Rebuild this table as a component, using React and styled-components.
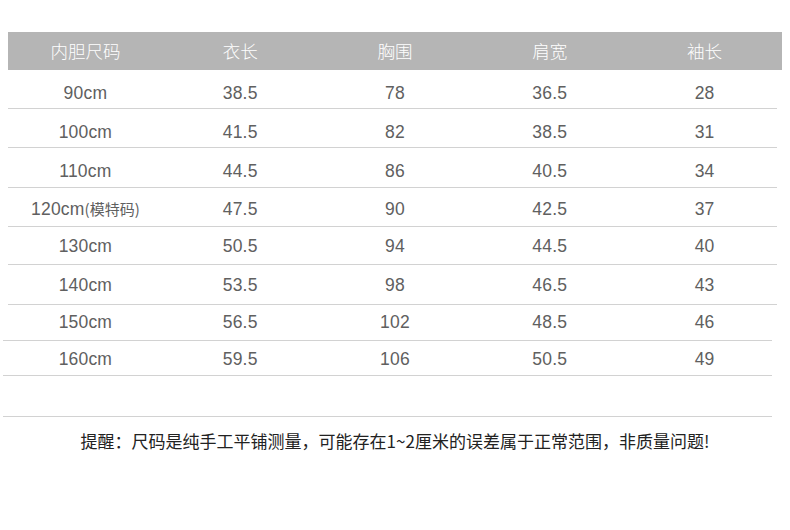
import React from "react";
import styled, { createGlobalStyle } from "styled-components";

const headers = ["内胆尺码", "衣长", "胸围", "肩宽", "袖长"];

// h: row height incl. line, pad: space above text
const rows = [
  { size: "90cm", cells: ["38.5", "78", "36.5", "28"], h: 39, pad: 13 },
  { size: "100cm", cells: ["41.5", "82", "38.5", "31"], h: 39, pad: 13 },
  { size: "110cm", cells: ["44.5", "86", "40.5", "34"], h: 40, pad: 13 },
  { size: "120cm", note: "(模特码)", cells: ["47.5", "90", "42.5", "37"], h: 39, pad: 11 },
  { size: "130cm", cells: ["50.5", "94", "44.5", "40"], h: 38, pad: 9 },
  { size: "140cm", cells: ["53.5", "98", "46.5", "43"], h: 40, pad: 10 },
  { size: "150cm", cells: ["56.5", "102", "48.5", "46"], h: 36, pad: 7 },
  { size: "160cm", cells: ["59.5", "106", "50.5", "49"], h: 35, pad: 8 },
];

const GlobalStyle = createGlobalStyle`
  html, body {
    margin: 0;
    padding: 0;
    background: #ffffff;
  }
  body {
    font-family: "Liberation Sans", "Noto Sans CJK SC", sans-serif;
  }
`;

const Page = styled.div`
  width: 790px;
  height: 530px;
  padding: 32px 0 0 8px;
  box-sizing: border-box;
`;

const Table = styled.div`
  width: 774px;
`;

const HeaderRow = styled.div`
  display: grid;
  grid-template-columns: repeat(5, 1fr);
  align-items: center;
  height: 38px;
  background: #b5b5b5;
`;

const HeadCell = styled.div`
  text-align: center;
  color: #ffffff;
  font-size: 17.5px;
  font-family: "Noto Sans CJK SC", sans-serif;
  font-weight: 300;
  line-height: 20px;
`;

const Row = styled.div`
  position: relative;
  display: grid;
  grid-template-columns: repeat(5, 1fr);
  align-items: start;
  height: ${({ $h }) => $h}px;
  padding-top: ${({ $pad }) => $pad}px;
  box-sizing: border-box;

  &::after {
    content: "";
    position: absolute;
    bottom: 0;
    left: ${({ $shift }) => ($shift ? "-5px" : "0")};
    width: 769px;
    height: 1px;
    background: #d2d2d2;
  }
`;

const Cell = styled.div`
  text-align: center;
  color: #606060;
  font-size: 17.5px;
  line-height: 20px;
  letter-spacing: 0.2px;
  white-space: nowrap;
`;

const Note = styled.span`
  font-family: "Noto Sans CJK SC", sans-serif;
  font-size: 15px;
  letter-spacing: 0;
`;

const Divider = styled.div`
  margin: 40px 0 0 -5px;
  width: 769px;
  height: 1px;
  background: #d2d2d2;
`;

const Remark = styled.p`
  margin: 14px 0 0 -8px;
  width: 790px;
  text-align: center;
  color: #222222;
  font-family: "Noto Sans CJK SC", sans-serif;
  font-size: 17px;
  line-height: 20px;
`;

const App = () => {
  return (
    <>
      <GlobalStyle />
      <Page>
        <Table>
          <HeaderRow>
            {headers.map((h) => (
              <HeadCell key={h}>{h}</HeadCell>
            ))}
          </HeaderRow>
          {rows.map((row, i) => (
            <Row key={row.size} $h={row.h} $pad={row.pad} $shift={i >= 6}>
              <Cell>
                {row.size}
                {row.note && <Note>{row.note}</Note>}
              </Cell>
              {row.cells.map((c, j) => (
                <Cell key={j}>{c}</Cell>
              ))}
            </Row>
          ))}
          <Divider />
        </Table>
        <Remark>
          提醒：尺码是纯手工平铺测量，可能存在1~2厘米的误差属于正常范围，非质量问题!
        </Remark>
      </Page>
    </>
  );
};

export default App;
